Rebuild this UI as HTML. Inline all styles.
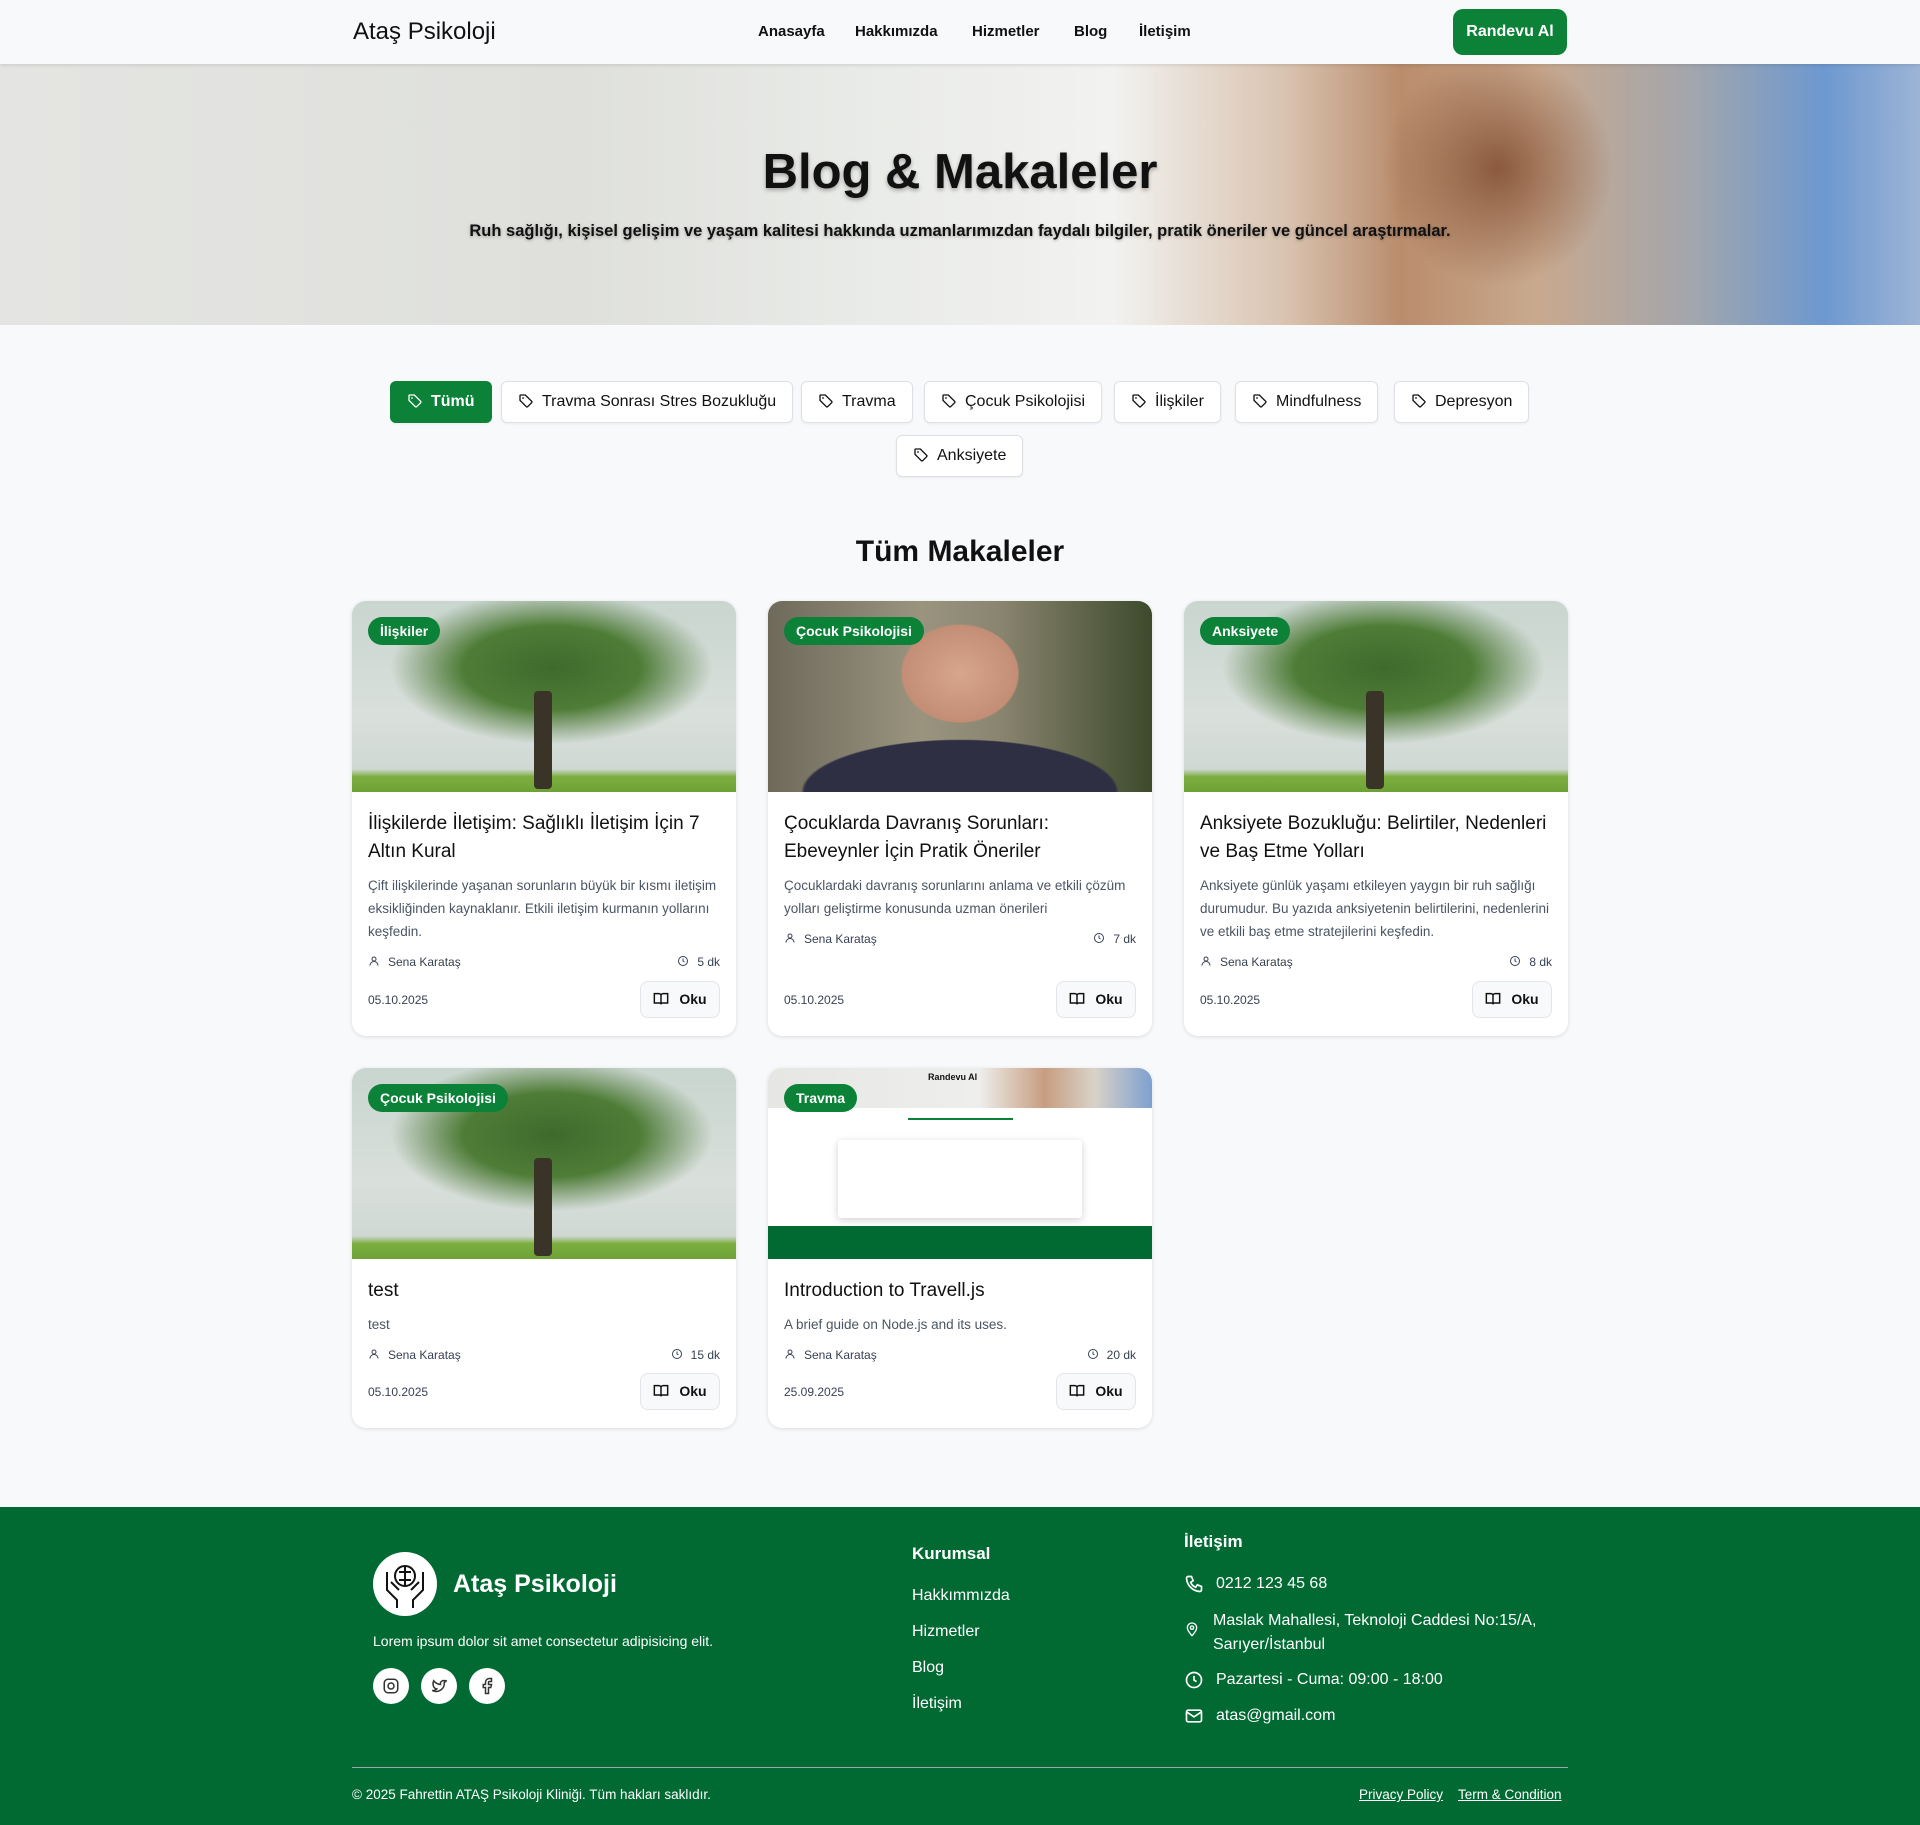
<!DOCTYPE html>
<html><head><meta charset="utf-8">
<style>
*{box-sizing:border-box;margin:0;padding:0}
body{width:1920px;height:1825px;background:#f8f9fb;font-family:"Liberation Sans",sans-serif;color:#111;position:relative;overflow:hidden}
.abs{position:absolute}
nav{position:absolute;left:0;top:0;width:1920px;height:64px;background:#f8f9fb;box-shadow:0 1px 4px rgba(0,0,0,.12);z-index:2}
.logo{left:353px;top:18px;font-size:24px;color:#111}
.nl{top:23px;font-size:15px;font-weight:bold;color:#111}
.btn{left:1453px;top:9px;width:114px;height:46px;background:#0b8238;color:#fff;border-radius:10px;font-weight:bold;font-size:16px;text-align:center;line-height:46px}
.hero{left:0;top:64px;width:1920px;height:261px;background:radial-gradient(ellipse 6% 45% at 78% 40%,#8c5a3e 0%,transparent 100%),linear-gradient(90deg,#e4e5e2 0%,#dfe0dc 30%,#e9ebe8 45%,#f2f2f0 58%,#d9c3b0 67%,#b98c6c 73%,#c9a98e 80%,#a3a6ac 88%,#6d98cf 95%,#9db4d6 100%)}
.hero h1{position:absolute;top:80px;width:100%;text-align:center;font-size:49px;font-weight:bold;text-shadow:0 2px 4px rgba(0,0,0,.3)}
.hero p{position:absolute;top:158px;width:100%;text-align:center;font-size:16.5px;font-weight:bold;text-shadow:0 1px 3px rgba(0,0,0,.3)}
.chip{height:42px;border:1px solid #dde1e6;background:#fff;border-radius:6px;font-size:16px;line-height:40px;padding:0 16px 0 16px;box-shadow:0 1px 2px rgba(0,0,0,.06);white-space:nowrap}
.chip svg{vertical-align:-3px;margin-right:8px}
.chip.on{background:#0b8238;color:#fff;border-color:#0b8238;font-weight:bold}
h2{position:absolute;top:535px;width:100%;text-align:center;font-size:30px;font-weight:bold}
.card{width:384px;background:#fff;border-radius:14px;box-shadow:0 1px 4px rgba(0,0,0,.12);overflow:hidden;display:flex;flex-direction:column}
.img{height:191px;position:relative;flex:none}
.tree{background:radial-gradient(ellipse 42% 40% at 52% 35%,#3f6a2c 0%,#4f7d37 55%,rgba(90,130,70,.6) 75%,transparent 100%),linear-gradient(180deg,#c9d5cf 0%,#d9e0dc 60%,#cfd8d3 88%,#7cae3f 92%,#6ea235 100%)}
.trunk{position:absolute;left:182px;top:90px;width:18px;height:98px;background:#3a3328;border-radius:4px}
.face{background:radial-gradient(ellipse 25% 42% at 50% 38%,#d7a58d 0%,#c48e76 60%,transparent 62%),radial-gradient(ellipse 45% 30% at 50% 100%,#2f2f44 0%,#2f2f44 90%,transparent 92%),linear-gradient(90deg,#6e6a5b,#9a947f 40%,#8a8570 60%,#3d4a2c)}
.tag{position:absolute;left:16px;top:16px;height:28px;line-height:28px;padding:0 12px;background:#0b8238;color:#fff;font-weight:bold;font-size:14px;border-radius:14px}
.body{padding:18px 16px 18px 16px;flex:1;display:flex;flex-direction:column}
.t{font-size:19px;line-height:28px;color:#111}
.d{margin-top:8px;font-size:13.5px;line-height:23px;color:#4b5563}
.m{display:flex;justify-content:space-between;font-size:12px;color:#374151;margin-top:12px}
.f{display:flex;justify-content:space-between;align-items:center;margin-top:auto;font-size:12px;color:#374151}
.oku{width:80px;height:37px;border:1px solid #e2e5ea;border-radius:8px;background:#f8f9fb;font-weight:bold;font-size:14px;color:#111;text-align:center;line-height:35px}
.oku svg{vertical-align:-3px;margin-right:10px}
footer{position:absolute;left:0;top:1507px;width:1920px;height:318px;background:#006a32;color:#fff}
footer .abs{color:#fff}
.fl{font-size:16px}
.soc{width:36px;height:36px;border-radius:50%;background:#fff;top:161px}
.soc svg{position:absolute;left:9px;top:9px}
.ci svg{position:absolute;left:0;top:1px}
</style></head><body>
<nav>
<div class="abs logo">Ataş Psikoloji</div>
<div class="abs nl" style="left:758px">Anasayfa</div>
<div class="abs nl" style="left:855px">Hakkımızda</div>
<div class="abs nl" style="left:972px">Hizmetler</div>
<div class="abs nl" style="left:1074px">Blog</div>
<div class="abs nl" style="left:1139px">İletişim</div>
<div class="abs btn">Randevu Al</div>
</nav>
<div class="abs hero"><h1>Blog &amp; Makaleler</h1><p>Ruh sağlığı, kişisel gelişim ve yaşam kalitesi hakkında uzmanlarımızdan faydalı bilgiler, pratik öneriler ve güncel araştırmalar.</p></div>

<svg width="0" height="0" style="position:absolute"><defs><symbol id="tg" viewBox="0 0 24 24"><path d="M3 4v7l9.5 9.5a1.5 1.5 0 0 0 2 0l6-6a1.5 1.5 0 0 0 0-2L11 3H4a1 1 0 0 0-1 1z" fill="none" stroke="currentColor" stroke-width="2"/><circle cx="7.5" cy="7.5" r="1.3" fill="currentColor"/></symbol>
<symbol id="bk" viewBox="0 0 24 24"><path d="M2 4h7a3 3 0 0 1 3 3v13a2 2 0 0 0-2-2H2zM22 4h-7a3 3 0 0 0-3 3v13a2 2 0 0 1 2-2h8z" fill="none" stroke="currentColor" stroke-width="2.2"/></symbol>
<symbol id="us" viewBox="0 0 24 24"><circle cx="12" cy="8" r="4" fill="none" stroke="currentColor" stroke-width="2"/><path d="M4 21a8 8 0 0 1 16 0" fill="none" stroke="currentColor" stroke-width="2"/></symbol>
<symbol id="ck" viewBox="0 0 24 24"><circle cx="12" cy="12" r="9" fill="none" stroke="currentColor" stroke-width="2"/><path d="M12 7v5l3 2" fill="none" stroke="currentColor" stroke-width="2"/></symbol></defs></svg>

<div class="abs chip on" style="left:390px;top:381px"><svg width="16" height="16"><use href="#tg"/></svg>Tümü</div>
<div class="abs chip" style="left:501px;top:381px"><svg width="16" height="16"><use href="#tg"/></svg>Travma Sonrası Stres Bozukluğu</div>
<div class="abs chip" style="left:801px;top:381px"><svg width="16" height="16"><use href="#tg"/></svg>Travma</div>
<div class="abs chip" style="left:924px;top:381px"><svg width="16" height="16"><use href="#tg"/></svg>Çocuk Psikolojisi</div>
<div class="abs chip" style="left:1114px;top:381px"><svg width="16" height="16"><use href="#tg"/></svg>İlişkiler</div>
<div class="abs chip" style="left:1235px;top:381px"><svg width="16" height="16"><use href="#tg"/></svg>Mindfulness</div>
<div class="abs chip" style="left:1394px;top:381px"><svg width="16" height="16"><use href="#tg"/></svg>Depresyon</div>
<div class="abs chip" style="left:896px;top:435px"><svg width="16" height="16"><use href="#tg"/></svg>Anksiyete</div>

<h2>Tüm Makaleler</h2>

<div class="abs card" style="left:352px;top:601px;height:435px"><div class="img tree"><div class="trunk"></div><div class="tag">İlişkiler</div></div>
<div class="body"><div class="t">İlişkilerde İletişim: Sağlıklı İletişim İçin 7 Altın Kural</div><div class="d">Çift ilişkilerinde yaşanan sorunların büyük bir kısmı iletişim eksikliğinden kaynaklanır. Etkili iletişim kurmanın yollarını keşfedin.</div>
<div class="m"><span><svg width="12" height="12" style="vertical-align:-1px;margin-right:8px"><use href="#us"/></svg>Sena Karataş</span><span><svg width="12" height="12" style="vertical-align:-1px;margin-right:8px"><use href="#ck"/></svg>5 dk</span></div>
<div class="f"><span>05.10.2025</span><div class="oku"><svg width="16" height="16"><use href="#bk"/></svg>Oku</div></div></div></div>

<div class="abs card" style="left:768px;top:601px;height:435px"><div class="img face"><div class="tag">Çocuk Psikolojisi</div></div>
<div class="body"><div class="t">Çocuklarda Davranış Sorunları: Ebeveynler İçin Pratik Öneriler</div><div class="d">Çocuklardaki davranış sorunlarını anlama ve etkili çözüm yolları geliştirme konusunda uzman önerileri</div>
<div class="m"><span><svg width="12" height="12" style="vertical-align:-1px;margin-right:8px"><use href="#us"/></svg>Sena Karataş</span><span><svg width="12" height="12" style="vertical-align:-1px;margin-right:8px"><use href="#ck"/></svg>7 dk</span></div>
<div class="f"><span>05.10.2025</span><div class="oku"><svg width="16" height="16"><use href="#bk"/></svg>Oku</div></div></div></div>

<div class="abs card" style="left:1184px;top:601px;height:435px"><div class="img tree"><div class="trunk"></div><div class="tag">Anksiyete</div></div>
<div class="body"><div class="t">Anksiyete Bozukluğu: Belirtiler, Nedenleri ve Baş Etme Yolları</div><div class="d">Anksiyete günlük yaşamı etkileyen yaygın bir ruh sağlığı durumudur. Bu yazıda anksiyetenin belirtilerini, nedenlerini ve etkili baş etme stratejilerini keşfedin.</div>
<div class="m"><span><svg width="12" height="12" style="vertical-align:-1px;margin-right:8px"><use href="#us"/></svg>Sena Karataş</span><span><svg width="12" height="12" style="vertical-align:-1px;margin-right:8px"><use href="#ck"/></svg>8 dk</span></div>
<div class="f"><span>05.10.2025</span><div class="oku"><svg width="16" height="16"><use href="#bk"/></svg>Oku</div></div></div></div>

<div class="abs card" style="left:352px;top:1068px;height:360px"><div class="img tree"><div class="trunk"></div><div class="tag">Çocuk Psikolojisi</div></div>
<div class="body"><div class="t">test</div><div class="d">test</div>
<div class="m"><span><svg width="12" height="12" style="vertical-align:-1px;margin-right:8px"><use href="#us"/></svg>Sena Karataş</span><span><svg width="12" height="12" style="vertical-align:-1px;margin-right:8px"><use href="#ck"/></svg>15 dk</span></div>
<div class="f"><span>05.10.2025</span><div class="oku"><svg width="16" height="16"><use href="#bk"/></svg>Oku</div></div></div></div>

<div class="abs card" style="left:768px;top:1068px;height:360px"><div class="img" style="background:#fff">
<div class="abs" style="left:0;top:0;width:384px;height:40px;background:linear-gradient(90deg,#e6e7e4,#eeeeec 55%,#c79d80 72%,#d9d2c8 85%,#7ea0cf)"></div>
<div class="abs" style="left:160px;top:4px;font-size:9px;font-weight:bold">Randevu Al</div>
<div class="abs" style="left:140px;top:50px;width:105px;height:2px;background:#0b8238"></div>
<div class="abs" style="left:70px;top:72px;width:244px;height:78px;background:#fff;box-shadow:0 2px 8px rgba(0,0,0,.18);border-radius:3px"></div>
<div class="abs" style="left:0;top:158px;width:384px;height:33px;background:#006a32"></div>
<div class="tag">Travma</div></div>
<div class="body"><div class="t">Introduction to Travell.js</div><div class="d">A brief guide on Node.js and its uses.</div>
<div class="m"><span><svg width="12" height="12" style="vertical-align:-1px;margin-right:8px"><use href="#us"/></svg>Sena Karataş</span><span><svg width="12" height="12" style="vertical-align:-1px;margin-right:8px"><use href="#ck"/></svg>20 dk</span></div>
<div class="f"><span>25.09.2025</span><div class="oku"><svg width="16" height="16"><use href="#bk"/></svg>Oku</div></div></div></div>

<footer>
<div class="abs" style="left:373px;top:45px;width:64px;height:64px;border-radius:50%;background:#fff">
<svg width="64" height="64" viewBox="0 0 64 64" fill="none" stroke="#111" stroke-width="2"><circle cx="32" cy="24" r="10"/><path d="M32 14v20M26 20h12M26 28h12"/><path d="M14 20v18l10 10v8M50 20v18L40 48v8M18 30l8 8M46 30l-8 8"/></svg></div>
<div class="abs" style="left:453px;top:63px;font-size:25px;font-weight:bold">Ataş Psikoloji</div>
<div class="abs" style="left:373px;top:126px;font-size:14px">Lorem ipsum dolor sit amet consectetur adipisicing elit.</div>
<div class="abs soc" style="left:373px"><svg width="18" height="18" viewBox="0 0 24 24" fill="none" stroke="#333" stroke-width="2"><rect x="3" y="3" width="18" height="18" rx="5"/><circle cx="12" cy="12" r="4"/></svg></div>
<div class="abs soc" style="left:421px"><svg width="18" height="18" viewBox="0 0 24 24" fill="none" stroke="#333" stroke-width="2"><path d="M22 4s-1 2-3 3c1 9-8 15-16 11 3 0 5-1 6-2-5-1-6-7-4-11 2 3 6 5 9 5-1-4 4-7 7-4z"/></svg></div>
<div class="abs soc" style="left:469px"><svg width="18" height="18" viewBox="0 0 24 24" fill="none" stroke="#333" stroke-width="2"><path d="M18 2h-3a5 5 0 0 0-5 5v3H7v4h3v8h4v-8h3l1-4h-4V7a1 1 0 0 1 1-1h3z"/></svg></div>
<div class="abs" style="left:912px;top:37px;font-size:17px;font-weight:bold">Kurumsal</div>
<div class="abs fl" style="left:912px;top:80px">Hakkımmızda</div>
<div class="abs fl" style="left:912px;top:116px">Hizmetler</div>
<div class="abs fl" style="left:912px;top:152px">Blog</div>
<div class="abs fl" style="left:912px;top:188px">İletişim</div>
<div class="abs" style="left:1184px;top:25px;font-size:17px;font-weight:bold">İletişim</div>
<div class="abs fl ci" style="left:1184px;top:68px;padding-left:32px"><svg width="20" height="20" viewBox="0 0 24 24" fill="none" stroke="#fff" stroke-width="2" style="top:-1px"><path d="M5 3h4l2 5-3 2a11 11 0 0 0 6 6l2-3 5 2v4a2 2 0 0 1-2 2A17 17 0 0 1 3 5a2 2 0 0 1 2-2z"/></svg>0212 123 45 68</div>
<div class="abs fl ci" style="left:1184px;top:102px;padding-left:29px;line-height:24px;width:390px"><svg width="16" height="16" viewBox="0 0 24 24" fill="none" stroke="#fff" stroke-width="2" style="top:12px"><path d="M12 22s-7-7-7-12a7 7 0 0 1 14 0c0 5-7 12-7 12z"/><circle cx="12" cy="10" r="2.5"/></svg>Maslak Mahallesi, Teknoloji Caddesi No:15/A, Sarıyer/İstanbul</div>
<div class="abs fl ci" style="left:1184px;top:164px;padding-left:32px"><svg width="20" height="20" viewBox="0 0 24 24" fill="none" stroke="#fff" stroke-width="2" style="top:-1px"><circle cx="12" cy="12" r="9"/><path d="M12 7v5l3 2"/></svg>Pazartesi - Cuma: 09:00 - 18:00</div>
<div class="abs fl ci" style="left:1184px;top:200px;padding-left:32px"><svg width="20" height="20" viewBox="0 0 24 24" fill="none" stroke="#fff" stroke-width="2" style="top:-1px"><rect x="3" y="5" width="18" height="14" rx="2"/><path d="M3 7l9 6 9-6"/></svg>atas@gmail.com</div>
<div class="abs" style="left:352px;top:260px;width:1216px;height:1px;background:#9aa8b5"></div>
<div class="abs" style="left:352px;top:280px;font-size:13.5px">© 2025 Fahrettin ATAŞ Psikoloji Kliniği. Tüm hakları saklıdır.</div>
<div class="abs" style="left:1359px;top:280px;font-size:13.5px;text-decoration:underline">Privacy Policy</div>
<div class="abs" style="left:1458px;top:280px;font-size:13.5px;text-decoration:underline">Term &amp; Condition</div>
</footer>
</body></html>
